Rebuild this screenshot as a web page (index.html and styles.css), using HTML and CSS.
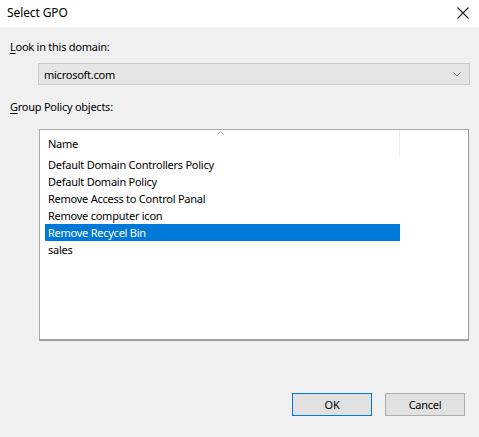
FILE: index.html
```html
<!DOCTYPE html>
<html>
<head>
	<meta charset="UTF-8">
	<title>Select GPO</title>
	<link rel="stylesheet" href="styles.css">
</head>
<body>

	<div class="dlg_wrapper">

		<div class="title_bar">
			<span class="title_text">Select GPO</span>
			<svg class="close_icon" width="12" height="12" viewBox="0 0 12 12">
				<path d="M0.5 0.5 L11.5 11.5 M11.5 0.5 L0.5 11.5" stroke="#222" stroke-width="1.1" fill="none"/>
			</svg>
		</div>

		<div class="dlg_body">
			<div class="field_label"><u>L</u>ook in this domain:</div>

			<div class="combo">
				<span class="combo_text">microsoft.com</span>
				<svg class="combo_arrow" width="8" height="5" viewBox="0 0 8 5">
					<path d="M0.5 0.5 L4 4 L7.5 0.5" stroke="#7a7a7a" stroke-width="1" fill="none"/>
				</svg>
			</div>

			<div class="field_label second"><u>G</u>roup Policy objects:</div>

			<div class="list_box">
				<div class="list_head">
					<span class="head_name">Name</span>
					<svg class="sort_arrow" width="7" height="4" viewBox="0 0 7 4">
						<path d="M0.5 3.5 L3.5 0.5 L6.5 3.5" stroke="#a8a8a8" stroke-width="1" fill="none"/>
					</svg>
				</div>
				<div class="list_rows">
					<div class="row">Default Domain Controllers Policy</div>
					<div class="row">Default Domain Policy</div>
					<div class="row">Remove Access to Control Panal</div>
					<div class="row">Remove computer icon</div>
					<div class="row selected">Remove Recycel Bin</div>
					<div class="row">sales</div>
				</div>
			</div>

			<div class="btn_bar">
				<button class="btn default">OK</button>
				<button class="btn">Cancel</button>
			</div>
		</div>

	</div>

</body>
</html>
```

FILE: styles.css
```css
html, body{
	margin: 0;
	padding: 0;
	background: #f0f0f0;
}

.dlg_wrapper{
	width: 479px;
	height: 437px;
	font-family: "Noto Sans", "Open Sans", sans-serif;
	font-size: 11px;
	letter-spacing: -0.25px;
	color: #000;
	background: #f0f0f0;
	overflow: hidden;
}

.title_bar{
	height: 27px;
	background: #fff;
	display: flex;
	align-items: center;
	justify-content: space-between;
	padding: 0 10px 0 7px;
}

.title_text{
	font-size: 12px;
	letter-spacing: -0.1px;
	margin-top: -2px;
}

.close_icon{
	margin-top: -1px;
}

.dlg_body{
	padding: 13px 0 0 0;
}

.field_label{
	margin-left: 10px;
	height: 14px;
	line-height: 14px;
}

.field_label u{
	text-decoration-thickness: 1px;
	text-underline-offset: 2px;
}

.field_label.second{
	margin-top: 15px;
}

.combo{
	margin: 9px 0 0 38px;
	width: 432px;
	height: 22px;
	box-sizing: border-box;
	border: 1px solid #c9c9c9;
	background: #e5e5e5;
	display: flex;
	align-items: center;
	justify-content: space-between;
	padding: 0 8px 0 5px;
}

.list_box{
	margin: 15px 0 0 39px;
	width: 430px;
	height: 212px;
	box-sizing: border-box;
	border: 1px solid #a9a9a9;
	border-right-color: #9a9a9a;
	border-bottom: 2px solid #a0a0a0;
	background: #fff;
}

.list_head{
	position: relative;
	width: 360px;
	height: 26px;
	box-sizing: border-box;
	border-right: 1px solid #ececec;
	display: flex;
	align-items: center;
	padding-left: 8px;
}

.sort_arrow{
	position: absolute;
	left: 177px;
	top: 1px;
}

.list_rows{
	padding-left: 5px;
}

.row{
	width: 355px;
	height: 17px;
	line-height: 17px;
	padding-left: 3px;
	box-sizing: border-box;
	white-space: nowrap;
}

.row.selected{
	background: #0078d7;
	color: #fff;
}

.btn_bar{
	display: flex;
	justify-content: flex-end;
	gap: 13px;
	margin: 52px 14px 0 0;
}

.btn{
	width: 80px;
	height: 23px;
	box-sizing: border-box;
	border: 1px solid #adadad;
	background: #e1e1e1;
	font-family: "Noto Sans", "Open Sans", sans-serif;
	font-size: 11px;
	letter-spacing: -0.25px;
	color: #000;
	padding: 0;
}

.btn.default{
	border-color: #0078d7;
}
```
